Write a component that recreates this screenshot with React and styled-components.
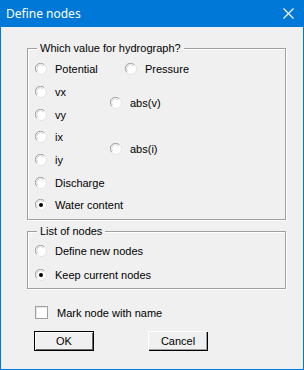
import React, { useState } from 'react';
import styled, { createGlobalStyle } from 'styled-components';

const GlobalStyle = createGlobalStyle`
  html, body {
    margin: 0;
    padding: 0;
    background: #f0f0f0;
  }
  * {
    box-sizing: border-box;
  }
`;

const Window = styled.div`
  width: 304px;
  height: 370px;
  border: 1px solid #0078d7;
  border-top: none;
  background: #f0f0f0;
  display: flex;
  flex-direction: column;
  font-family: "Liberation Sans", Arial, sans-serif;
  font-size: 11px;
  color: #000;
`;

const TitleBar = styled.div`
  height: 27px;
  margin: 0 -1px;
  background: #0078d7;
  display: flex;
  align-items: center;
  justify-content: space-between;
  padding: 0 10px 1px 6px;
  color: #fff;
`;

const Title = styled.span`
  font-family: "Noto Sans", "Open Sans", sans-serif;
  font-size: 12px;
`;

const Content = styled.div`
  display: flex;
  flex-direction: column;
  padding: 21px 17px 0 26px;
`;

const Group = styled.div`
  position: relative;
  border: 1px solid #a0a0a0;
  box-shadow: inset 1px 1px 0 #fff, 1px 1px 0 #fff;
  padding: ${p => p.$pad};
  margin-top: ${p => p.$mt || 0}px;
`;

const Legend = styled.span`
  position: absolute;
  top: -8px;
  left: 9px;
  padding: 0 3px;
  background: #f0f0f0;
  line-height: 14px;
`;

const ValueGrid = styled.div`
  display: grid;
  grid-template-columns: 75px 1fr;
  grid-template-rows: repeat(14, 11.333px);
`;

const ListGrid = styled.div`
  display: grid;
  grid-template-rows: repeat(2, 24px);
`;

const Option = styled.label`
  display: flex;
  align-items: center;
  gap: 8px;
  grid-column: ${p => p.$col || 1};
  grid-row: ${p => p.$row};
  margin-left: ${p => p.$indent || 0}px;
  white-space: nowrap;
  cursor: default;
`;

const Mark = styled.svg`
  flex-shrink: 0;
  display: block;
`;

const CheckRow = styled.label`
  display: flex;
  align-items: center;
  gap: 9px;
  height: 20px;
  margin: 14px 0 0 8px;
`;

const ButtonRow = styled.div`
  display: flex;
  gap: 54px;
  margin: 8px 0 0 7px;
`;

const Button = styled.button`
  width: ${p => p.$w}px;
  height: 20px;
  padding: 0;
  background: #f0f0f0;
  font-family: "Liberation Sans", Arial, sans-serif;
  font-size: 11px;
  color: #000;
  border: none;
  box-shadow: ${p => p.$default
    ? 'inset 0 0 0 1px #000, inset 2px 2px 0 #fff, inset -2px -2px 0 #696969'
    : 'inset 1px 1px 0 #fff, inset -1px -1px 0 #000, inset -2px -2px 0 #a0a0a0'};
`;

const Radio = ({ checked }) => (
  <Mark width="12" height="12" viewBox="0 0 12 12">
    <circle cx="6" cy="6" r="5.5" fill="#fff" stroke="#e3e3e3" />
    <path d="M1.8 9.2 A5 5 0 0 1 9.2 1.8" fill="none" stroke="#a0a0a0" strokeWidth="1" />
    <path d="M2.8 8.2 A3.8 3.8 0 0 1 8.2 2.8" fill="none" stroke="#d8d8d8" strokeWidth="1" />
    {checked && <circle cx="6" cy="6" r="2" fill="#000" />}
  </Mark>
);

const Checkbox = () => (
  <Mark width="13" height="13" viewBox="0 0 13 13">
    <rect x="0.5" y="0.5" width="12" height="12" fill="#fff" stroke="#a0a0a0" />
    <path d="M1.5 11.5 V1.5 H11.5" fill="none" stroke="#e3e3e3" />
  </Mark>
);

const values = [
  { label: 'Potential', row: '1 / span 2' },
  { label: 'vx', row: '3 / span 2' },
  { label: 'vy', row: '5 / span 2' },
  { label: 'ix', row: '7 / span 2' },
  { label: 'iy', row: '9 / span 2' },
  { label: 'Discharge', row: '11 / span 2' },
  { label: 'Water content', row: '13 / span 2' },
  { label: 'Pressure', row: '1 / span 2', col: 2, indent: 15 },
  { label: 'abs(v)', row: '4 / span 2', col: 2 },
  { label: 'abs(i)', row: '8 / span 2', col: 2 },
];

export default function App() {
  const [value] = useState('Water content');
  const [list] = useState('keep');

  return (
    <>
      <GlobalStyle />
      <Window>
        <TitleBar>
          <Title>Define nodes</Title>
          <svg width="11" height="11" viewBox="0 0 11 11">
            <path d="M0.5 0.5 L10.5 10.5 M10.5 0.5 L0.5 10.5" stroke="#fff" strokeWidth="1.1" />
          </svg>
        </TitleBar>
        <Content>
          <Group $pad="9px 0 2px 7px">
            <Legend>Which value for hydrograph?</Legend>
            <ValueGrid>
              {values.map(v => (
                <Option key={v.label} $row={v.row} $col={v.col} $indent={v.indent}>
                  <Radio checked={value === v.label} />
                  {v.label}
                </Option>
              ))}
            </ValueGrid>
          </Group>
          <Group $pad="7px 0 1px 7px" $mt={11}>
            <Legend>List of nodes</Legend>
            <ListGrid>
              <Option $row="1">
                <Radio checked={list === 'new'} />
                Define new nodes
              </Option>
              <Option $row="2">
                <Radio checked={list === 'keep'} />
                Keep current nodes
              </Option>
            </ListGrid>
          </Group>
          <CheckRow>
            <Checkbox />
            Mark node with name
          </CheckRow>
          <ButtonRow>
            <Button $w={60} $default>OK</Button>
            <Button $w={60}>Cancel</Button>
          </ButtonRow>
        </Content>
      </Window>
    </>
  );
}
